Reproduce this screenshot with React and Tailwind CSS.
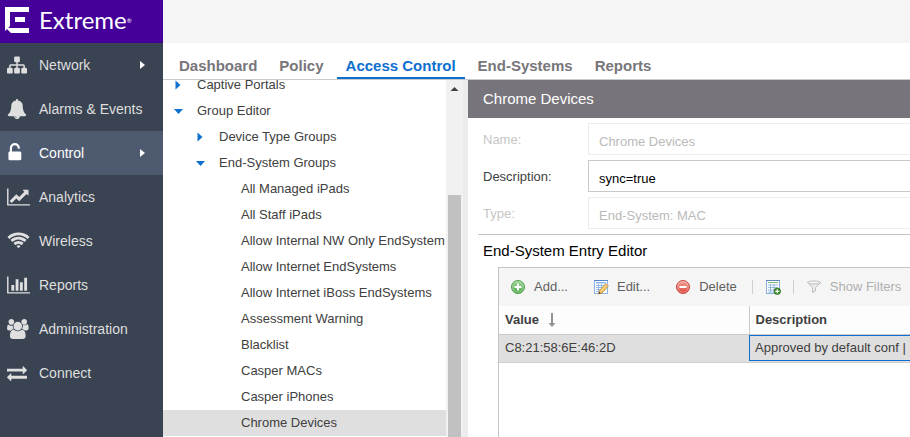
import React from "react";

const NAV = [
  {
    label: "Network",
    arrow: true,
    box: "0 0 1792 1792",
    w: 20,
    d: "M1792 1248v320q0 40-28 68t-68 28h-320q-40 0-68-28t-28-68v-320q0-40 28-68t68-28h96v-192h-512v192h96q40 0 68 28t28 68v320q0 40-28 68t-68 28h-320q-40 0-68-28t-28-68v-320q0-40 28-68t68-28h96v-192h-512v192h96q40 0 68 28t28 68v320q0 40-28 68t-68 28h-320q-40 0-68-28t-28-68v-320q0-40 28-68t68-28h96v-192q0-52 38-90t90-38h512v-192h-96q-40 0-68-28t-28-68v-320q0-40 28-68t68-28h320q40 0 68 28t28 68v320q0 40-28 68t-68 28h-96v192h512q52 0 90 38t38 90v192h96q40 0 68 28t28 68z",
  },
  {
    label: "Alarms & Events",
    box: "0 0 1792 1792",
    w: 20,
    d: "M912 1696q0-16-16-16-59 0-101.5-42.5t-42.5-101.5q0-16-16-16t-16 16q0 73 51.5 124.5t124.5 51.5q16 0 16-16zm816-288q0 52-38 90t-90 38h-448q0 106-75 181t-181 75-181-75-75-181h-448q-52 0-90-38t-38-90q50-42 91-88t85-119.5 74.5-158.5 50-206 19.5-260q0-152 117-282.5t307-158.5q-8-19-8-39 0-40 28-68t68-28 68 28 28 68q0 20-8 39 190 28 307 158.5t117 282.5q0 139 19.5 260t50 206 74.5 158.5 85 119.5 91 88z",
  },
  {
    label: "Control",
    arrow: true,
    active: true,
    box: "192 0 1792 1792",
    w: 20,
    d: "M1376 768q40 0 68 28t28 68v576q0 40-28 68t-68 28h-960q-40 0-68-28t-28-68v-576q0-40 28-68t68-28h32v-320q0-185 131.5-316.5t316.5-131.5 316.5 131.5 131.5 316.5q0 26-19 45t-45 19h-64q-26 0-45-19t-19-45q0-106-75-181t-181-75-181 75-75 181v320h736z",
  },
  {
    label: "Analytics",
    box: "0 0 2048 1792",
    w: 23,
    d: "M2048 1536v128h-2048v-1536h128v1408h1920zm-128-1248v435q0 21-19.5 29.5t-35.5-7.5l-121-121-633 633q-10 10-23 10t-23-10l-233-233-416 416-192-192 585-585q10-10 23-10t23 10l233 233 464-464-121-121q-16-16-7.5-35.5t29.5-19.5h435q14 0 23 9t9 23z",
  },
  {
    label: "Wireless",
    box: "0 0 2048 1792",
    w: 23,
    d: "M1024 1523q-20 0-93-73.5t-73-93.5q0-32 62.5-54t103.5-22 103.5 22 62.5 54q0 20-73 93.5t-93 73.5zm270-270q-2 0-40-25t-101.5-50-128.5-25-128.5 25-101 50-40.5 25q-18 0-93.5-75t-75.5-93q0-13 10-23 78-77 196-121t233-44 233 44 196 121q10 10 10 23 0 18-75.5 93t-93.5 75zm273-272q-11 0-23-8-136-105-252-154.5t-268-49.5q-85 0-170.5 22t-149 53-113.5 62-79 53-31 22q-17 0-92-75t-75-93q0-12 10-22 132-132 320-205t380-73 380 73 320 205q10 10 10 22 0 18-75 93t-92 75zm271-271q-11 0-22-9-179-157-371.5-236.5t-420.5-79.5-420.5 79.5-371.5 236.5q-11 9-22 9-17 0-92.5-75t-75.5-93q0-13 10-23 187-186 445-288t527-102 527 102 445 288q10 10 10 23 0 18-75.5 93t-92.5 75z",
  },
  {
    label: "Reports",
    box: "0 0 2048 1792",
    w: 23,
    d: "M640 896v512h-256v-512h256zm384-512v1024h-256v-1024h256zm1024 1152v128h-2048v-1536h128v1408h1920zm-640-896v768h-256v-768h256zm384-384v1152h-256v-1152h256z",
  },
  {
    label: "Administration",
    box: "64 0 2048 1792",
    w: 23,
    d: "M657 896q-162 5-265 128h-134q-82 0-138-40.5t-56-118.5q0-353 124-353 6 0 43.5 21t97.5 42.5 119 21.5q67 0 133-23-5 37-5 66 0 159 93 293zm1071 637q0 120-73 189.500t-194 69.500h-874q-121 0-194-69.500t-73-189.500q0-53 3.500-103.500t14-109 26.500-108.500 43-97.500 62-81 85.500-53.500 111.500-20q10 0 43 21.500t73 48 107 48 135 21.500 135-21.500 107-48 73-48 43-21.500q61 0 111.500 20t85.500 53.500 62 81 43 97.500 26.500 108.500 14 109 3.500 103.500zm-1024-1277q0 106-75 181t-181 75-181-75-75-181 75-181 181-75 181 75 75 181zm704 384q0 159-112.500 271.500t-271.500 112.500-271.500-112.500-112.500-271.500 112.500-271.500 271.500-112.500 271.500 112.500 112.500 271.500zm576 225q0 78-56 118.500t-138 40.500h-134q-103-123-265-128 93-134 93-293 0-29-5-66 66 23 133 23 59 0 119-21.500t97.500-42.500 43.500-21q124 0 124 353zm-128-609q0 106-75 181t-181 75-181-75-75-181 75-181 181-75 181 75 75 181z",
  },
  {
    label: "Connect",
    box: "0 0 1792 1792",
    w: 20,
    d: "M1792 1184v192q0 13-9.5 22.5t-22.5 9.5h-1376v192q0 13-9.5 22.5t-22.5 9.5q-12 0-24-10l-319-320q-9-9-9-22 0-14 9-23l320-320q9-9 23-9 13 0 22.5 9.5t9.5 22.5v192h1376q13 0 22.5 9.5t9.5 22.5zm0-544q0 14-9 23l-320 320q-9 9-23 9-13 0-22.5-9.5t-9.5-22.5v-192h-1376q-13 0-22.5-9.5t-9.5-22.5v-192q0-13 9.5-22.5t22.5-9.5h1376v-192q0-14 9-23t23-9q12 0 24 10l319 319q9 9 9 23z",
  },
];

const TABS = ["Dashboard", "Policy", "Access Control", "End-Systems", "Reports"];

const TREE = [
  { label: "Captive Portals", level: 1, state: "closed" },
  { label: "Group Editor", level: 1, state: "open" },
  { label: "Device Type Groups", level: 2, state: "closed" },
  { label: "End-System Groups", level: 2, state: "open" },
  { label: "All Managed iPads", level: 3 },
  { label: "All Staff iPads", level: 3 },
  { label: "Allow Internal NW Only EndSystem", level: 3 },
  { label: "Allow Internet EndSystems", level: 3 },
  { label: "Allow Internet iBoss EndSystems", level: 3 },
  { label: "Assessment Warning", level: 3 },
  { label: "Blacklist", level: 3 },
  { label: "Casper MACs", level: 3 },
  { label: "Casper iPhones", level: 3 },
  { label: "Chrome Devices", level: 3, selected: true },
];

const INDENT = { 1: "pl-[9px]", 2: "pl-[31px]", 3: "pl-[53px]" };

function Logo() {
  return (
    <div className="flex h-[43px] shrink-0 items-center gap-[10px] bg-[#440099] pb-1 pl-[5px] text-white">
      <svg width="24" height="26" viewBox="0 0 24 26" fill="#fff">
        <path d="M0 0H24V5H5V19L0 24Z" />
        <path d="M10 10H20V15H10Z" />
        <path d="M0.500 20.500L5.500 21H24V26H6Z" />
      </svg>
      <span className="flex font-['Lato',sans-serif] text-2xl leading-7">
        Extreme
        <span className="pt-3 text-[6px] leading-none">®</span>
      </span>
    </div>
  );
}

function Sidebar() {
  return (
    <aside className="flex w-[163px] shrink-0 flex-col bg-[#394352]">
      <Logo />
      <nav className="flex flex-col">
        {NAV.map((n) => (
          <a
            key={n.label}
            href="#"
            className={`flex h-11 items-center pl-[7px] text-sm ${
              n.active ? "bg-[#4d5a70] text-white" : "text-[#dfdfdf]"
            }`}
          >
            <span className="w-8 shrink-0">
              <svg width={n.w} height="20" viewBox={n.box} fill="currentColor">
                <path d={n.d} />
              </svg>
            </span>
            <span className="flex-1 whitespace-nowrap">{n.label}</span>
            {n.arrow && (
              <svg width="5" height="8" viewBox="0 0 5 8" fill="#fff" className="mr-[18px]">
                <path d="M0 0L5 4L0 8Z" />
              </svg>
            )}
          </a>
        ))}
      </nav>
    </aside>
  );
}

function Tabs() {
  return (
    <nav className="flex h-[37px] shrink-0 items-end gap-1 border-b border-[#c9cccc] pl-[7px]">
      {TABS.map((t) => (
        <a
          key={t}
          href="#"
          className={`whitespace-nowrap border-b-2 px-[9px] pb-px text-[15px] font-bold leading-5 ${
            t === "Access Control"
              ? "border-[#0d6fcf] text-[#0d6fcf]"
              : "border-transparent text-[#77767a]"
          }`}
        >
          {t}
        </a>
      ))}
    </nav>
  );
}

function Twisty({ state }) {
  return (
    <span className="flex w-[25px] shrink-0 items-center pl-[2px]">
      {state === "closed" && (
        <svg width="9" height="10" viewBox="0 0 9 10" fill="#0d6fcf">
          <path d="M1.500 0.500L6.500 5L1.500 9.500Z" />
        </svg>
      )}
      {state === "open" && (
        <svg width="9" height="10" viewBox="0 0 9 10" fill="#0d6fcf">
          <path d="M0 3H9L4.500 8Z" />
        </svg>
      )}
    </span>
  );
}

function Tree() {
  return (
    <div className="flex w-[300px] shrink-0 overflow-hidden">
      <ul className="-mt-2 min-w-0 flex-1 overflow-hidden">
        {TREE.map((r) => (
          <li key={r.label}>
            <button
              className={`flex h-[26px] w-full items-center text-[13px] text-[#404040] ${
                INDENT[r.level]
              } ${r.selected ? "bg-[#dfdfdf]" : ""}`}
            >
              <Twisty state={r.state} />
              <span className="whitespace-nowrap">{r.label}</span>
            </button>
          </li>
        ))}
      </ul>
      <div className="flex w-[17px] shrink-0 flex-col items-center bg-[#f1f1f1]">
        <svg width="17" height="17" viewBox="0 0 17 17" fill="#404040" className="shrink-0">
          <path d="M8.500 7L12.500 11H4.500Z" />
        </svg>
        <div className="mt-[98px] w-[13px] flex-1 bg-[#c1c1c1]" />
      </div>
    </div>
  );
}

function Field({ id, label, value, disabled }) {
  return (
    <div className="flex h-8 items-center">
      <label
        htmlFor={id}
        className={`w-[105px] shrink-0 pt-[2px] text-[13px] ${
          disabled ? "text-[#c6c6c6]" : "text-[#404040]"
        }`}
      >
        {label}
      </label>
      <input
        id={id}
        defaultValue={value}
        disabled={disabled}
        className={`h-8 min-w-0 flex-1 border border-r-0 bg-white px-[10px] pt-1 text-[13px] outline-none ${
          disabled ? "border-[#ececec] text-[#bababa]" : "border-[#c9c9c9] text-black"
        }`}
      />
    </div>
  );
}

function CircleIcon({ plus }) {
  const id = plus ? "add-fill" : "del-fill";
  const edge = plus ? "#4f9f4c" : "#c6453d";
  return (
    <svg width="16" height="16" viewBox="0 0 16 16">
      <defs>
        <linearGradient id={id} x1="0" y1="0" x2="0" y2="1">
          <stop offset="0" stopColor={plus ? "#9bd596" : "#f7a79c"} />
          <stop offset="1" stopColor={plus ? "#4faa4a" : "#dc4439"} />
        </linearGradient>
      </defs>
      <circle cx="8" cy="8" r="6.500" fill={`url(#${id})`} stroke={edge} />
      <circle cx="8" cy="8" r="5.300" fill="none" stroke="#fff" strokeOpacity="0.4" strokeWidth="0.800" />
      <path d="M4.500 7H11.500V9H4.500Z" fill="#fff" />
      {plus && <path d="M7 4.500H9V11.500H7Z" fill="#fff" />}
    </svg>
  );
}

function EditIcon() {
  return (
    <svg width="16" height="16" viewBox="0 0 16 16">
      <rect x="1.500" y="1.500" width="13" height="13" fill="#fff" stroke="#8db4e6" />
      <path d="M1 1.500H15" stroke="#4f86cc" />
      <path d="M3 3H13V4.500H3Z" fill="#8fb5e8" />
      <path d="M3 6.500H12M3 8.500H11M3 10.500H9M3 12.500H7M5.500 5V13M8.500 5V11" stroke="#8fb5e8" strokeWidth="0.900" />
      <path d="M5.500 15L6.500 11.500L12.500 5L15 7.500L9 14Z" fill="#f6c15a" stroke="#c08a34" strokeWidth="0.800" />
      <path d="M7.500 12.500L13.500 6.200" stroke="#fde8b0" strokeWidth="1" />
      <path d="M5.500 15L6.100 12.800L7.700 14.300Z" fill="#4b3a20" />
      <path d="M12.500 5L13.300 4.300L15.700 6.700L15 7.500Z" fill="#e5a08a" />
    </svg>
  );
}

function GridAddIcon() {
  return (
    <svg width="16" height="16" viewBox="0 0 16 16">
      <rect x="1.500" y="1.500" width="13" height="13" fill="#fff" stroke="#8aaed8" />
      <path d="M1 1.500H15" stroke="#5d86b8" />
      <path d="M3 3.500H13" stroke="#7fb36c" />
      <path d="M3 6H13M3 8.500H13M3 11H10M3 13H9M5.500 5V13.500M9 5V13" stroke="#8fb2de" strokeWidth="0.900" />
      <circle cx="12.300" cy="12.300" r="3.300" fill="#3d8a2c" stroke="#2c6d1f" strokeWidth="0.600" />
      <path d="M11.700 10.300H12.900V11.700H14.300V12.900H12.900V14.300H11.700V12.900H10.300V11.700H11.700Z" fill="#fff" />
    </svg>
  );
}

function FilterIcon() {
  return (
    <svg width="16" height="16" viewBox="0 0 16 16">
      <path d="M1.500 3.500L6.500 8.500V13.500L9.500 12V8.500L14.500 3.500Z" fill="#ededed" stroke="#bdbdbd" />
      <ellipse cx="8" cy="3.500" rx="6.500" ry="1.500" fill="#f6f6f6" stroke="#bdbdbd" />
    </svg>
  );
}

function ToolButton({ icon, label, disabled, compact, name }) {
  return (
    <button
      disabled={disabled}
      aria-label={name}
      className={`flex h-8 shrink-0 items-center gap-2 whitespace-nowrap text-[13px] ${
        compact ? "px-[7px]" : "px-[10px]"
      } ${disabled ? "text-[#b0b0b0]" : "text-[#606060]"}`}
    >
      {icon}
      {label}
    </button>
  );
}

function EntryGrid() {
  return (
    <div className="ml-[30px] flex-1 border-l border-t border-[#c4c4c4]">
      <div className="flex h-[38px] items-center gap-[5px] overflow-hidden bg-[#f5f5f5] pl-px">
        <ToolButton icon={<CircleIcon plus />} label="Add..." />
        <ToolButton icon={<EditIcon />} label="Edit..." />
        <ToolButton icon={<CircleIcon />} label="Delete" />
        <span className="h-[14px] w-px shrink-0 bg-[#cfcfcf]" />
        <ToolButton icon={<GridAddIcon />} compact name="Add columns" />
        <span className="h-[14px] w-px shrink-0 bg-[#cfcfcf]" />
        <ToolButton icon={<FilterIcon />} label="Show Filters" disabled compact />
      </div>
      <table className="w-full table-fixed border-collapse text-left text-[13px] text-[#404040]">
        <thead>
          <tr className="h-7 border-b border-[#c9c9c9] bg-[#fdfdfd]">
            <th className="w-[250px] border-r border-[#c9c9c9] px-[6px] py-0 font-bold">
              <span className="flex items-center gap-[9px]">
                Value
                <svg width="8" height="14" viewBox="0 0 8 14" fill="#929292">
                  <path d="M3 0H5V10H7.500L4 14L0.500 10H3Z" />
                </svg>
              </span>
            </th>
            <th className="px-[6px] py-0 font-bold">Description</th>
          </tr>
        </thead>
        <tbody>
          <tr className="h-7 border-b border-[#cfcfcf] bg-[#dfdfdf]">
            <td className="px-[6px] py-0">C8:21:58:6E:46:2D</td>
            <td className="p-0">
              <div className="flex h-[26px] items-center whitespace-nowrap border border-r-0 border-[#0d6fcf] pl-[5px]">
                Approved by default conf |
              </div>
            </td>
          </tr>
        </tbody>
      </table>
    </div>
  );
}

export default function App() {
  return (
    <div className="flex h-screen overflow-hidden bg-white font-['Liberation_Sans',Arial,sans-serif]">
      <Sidebar />
      <div className="flex min-w-0 flex-1 flex-col">
        <header className="h-[43px] shrink-0 bg-[#f5f5f5]" />
        <Tabs />
        <div className="flex min-h-0 flex-1">
          <Tree />
          <div className="w-[5px] shrink-0 bg-[#ececec]" />
          <main className="flex min-w-0 flex-1 flex-col">
            <h1 className="flex h-[38px] shrink-0 items-center bg-[#77757b] pl-[15px] text-[15px] text-white">
              Chrome Devices
            </h1>
            <form className="flex flex-col gap-[5px] py-[5px] pl-[15px]">
              <Field id="name" label="Name:" value="Chrome Devices" disabled />
              <Field id="description" label="Description:" value="sync=true" />
              <Field id="type" label="Type:" value="End-System: MAC" disabled />
            </form>
            <h2 className="ml-[10px] flex h-[33px] shrink-0 items-center border-t border-[#c4c4c4] pl-[5px] text-[15px] text-black">
              End-System Entry Editor
            </h2>
            <EntryGrid />
          </main>
        </div>
      </div>
    </div>
  );
}
